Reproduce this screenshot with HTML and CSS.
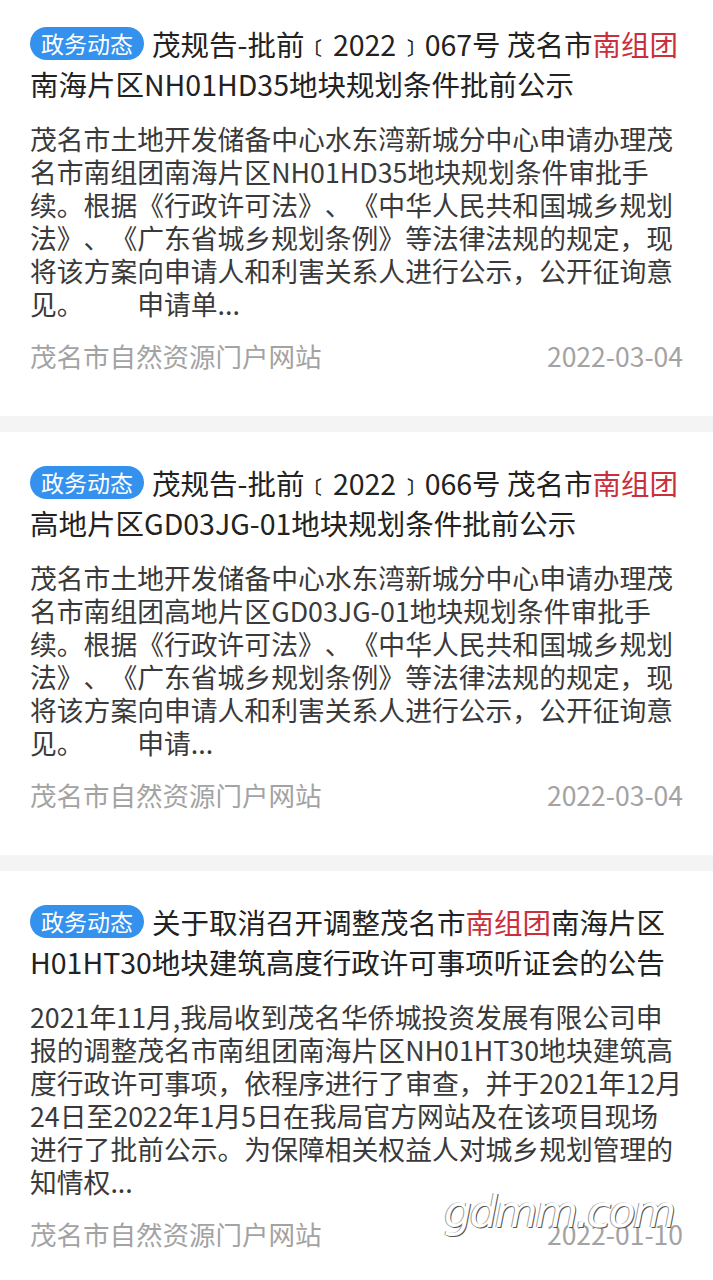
FILE: index.html
```
<!DOCTYPE html>
<html lang="zh-CN">
<head>
    <meta charset="UTF-8">
    <meta name="viewport" content="width=device-width, initial-scale=1.0">
    <title>政务动态</title>
    <link rel="stylesheet" href="styles.css">
</head>
<body>
    <div class="news-list">
        <div class="news-card">
            <div class="news-title">
                <span class="tag">政务动态</span>茂规告-批前﹝2022﹞067号 茂名市<span class="hl">南组团</span>南海片区NH01HD35地块规划条件批前公示
            </div>
            <div class="news-summary">茂名市土地开发储备中心水东湾新城分中心申请办理茂名市南组团南海片区NH01HD35地块规划条件审批手续。根据《行政许可法》、《中华人民共和国城乡规划法》、《广东省城乡规划条例》等法律法规的规定，现将该方案向申请人和利害关系人进行公示，公开征询意见。&emsp;&emsp;申请单...</div>
            <div class="news-meta">
                <span>茂名市自然资源门户网站</span>
                <span>2022-03-04</span>
            </div>
        </div>
        <div class="news-card">
            <div class="news-title">
                <span class="tag">政务动态</span>茂规告-批前﹝2022﹞066号 茂名市<span class="hl">南组团</span>高地片区GD03JG-01地块规划条件批前公示
            </div>
            <div class="news-summary">茂名市土地开发储备中心水东湾新城分中心申请办理茂名市南组团高地片区GD03JG-01地块规划条件审批手续。根据《行政许可法》、《中华人民共和国城乡规划法》、《广东省城乡规划条例》等法律法规的规定，现将该方案向申请人和利害关系人进行公示，公开征询意见。&emsp;&emsp;申请...</div>
            <div class="news-meta">
                <span>茂名市自然资源门户网站</span>
                <span>2022-03-04</span>
            </div>
        </div>
        <div class="news-card">
            <div class="news-title">
                <span class="tag">政务动态</span>关于取消召开调整茂名市<span class="hl">南组团</span>南海片区H01HT30地块建筑高度行政许可事项听证会的公告
            </div>
            <div class="news-summary">2021年11月,我局收到茂名华侨城投资发展有限公司申报的调整茂名市南组团南海片区NH01HT30地块建筑高度行政许可事项，依程序进行了审查，并于2021年12月24日至2022年1月5日在我局官方网站及在该项目现场进行了批前公示。为保障相关权益人对城乡规划管理的知情权...</div>
            <div class="news-meta">
                <span>茂名市自然资源门户网站</span>
                <span>2022-01-10</span>
            </div>
        </div>
    </div>
    <div class="watermark">gdmm.com</div>
</body>
</html>
```

FILE: styles.css
```
body {
    margin: 0;
    background: #f4f4f4;
    font-family: "Noto Sans CJK SC", sans-serif;
    text-spacing-trim: space-all;
    overflow: hidden;
}
.news-list {
    margin-top: -7px;
    display: flex;
    flex-direction: column;
    gap: 16px;
}
.news-card {
    background: #fff;
    padding: 31px 30px 40px 30px;
}
.news-title {
    font-size: 28.5px;
    line-height: 40px;
    color: #222;
}
.tag {
    display: inline-block;
    height: 33px;
    line-height: 33px;
    padding: 0 11px;
    margin-right: 8px;
    border-radius: 17px;
    background: #3491ee;
    color: #fff;
    font-size: 23px;
    vertical-align: 3px;
}
.hl {
    color: #c9303b;
}
.news-summary {
    margin-top: 18px;
    font-size: 26.8px;
    line-height: 33px;
    color: #3a3a3a;
}
.news-meta {
    margin-top: 16px;
    display: flex;
    justify-content: space-between;
    font-size: 26.5px;
    line-height: 40px;
    color: #a3a3a3;
}
.watermark {
    position: absolute;
    left: 444px;
    top: 1186px;
    font-family: "DejaVu Sans", sans-serif;
    font-size: 44px;
    font-style: italic;
    font-weight: 300;
    letter-spacing: -2.5px;
    color: #fff;
    text-shadow: 1px 1px 0 #555, -1px 0 0 #999;
}
```
